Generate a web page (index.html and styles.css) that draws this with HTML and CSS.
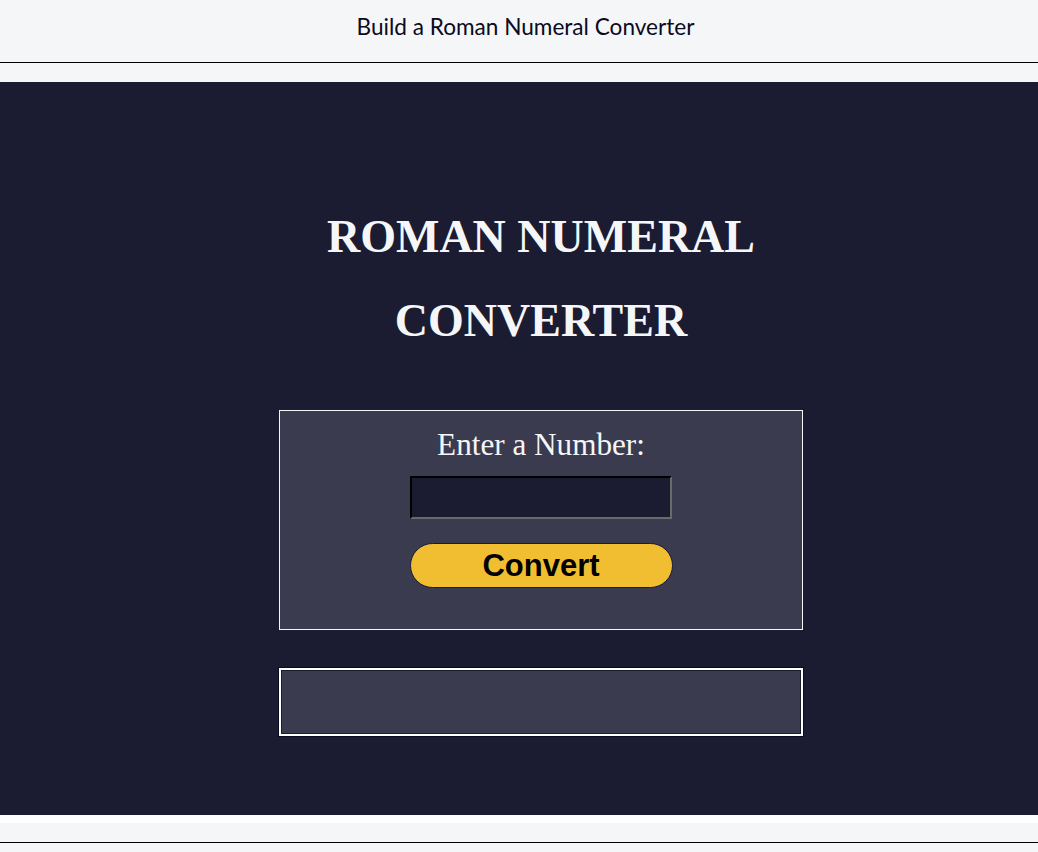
FILE: index.html
```
<!DOCTYPE html>
<html lang="en">
<head>
<meta charset="utf-8">
<title>Roman Numeral Converter</title>
<link rel="stylesheet" href="styles.css">
</head>
<body>
<header class="topbar">
  <span class="topbar-title">Build a Roman Numeral Converter</span>
</header>
<div class="spacer"></div>
<main class="app">
  <div class="container">
    <h1 class="title">ROMAN NUMERAL CONVERTER</h1>
    <form class="card" onsubmit="return false;">
      <label class="label" for="number">Enter a Number:</label>
      <input class="number-input" id="number" type="number">
      <button class="convert-btn" type="button">Convert</button>
    </form>
    <div class="output"></div>
  </div>
</main>
<div class="white-band"></div>
<div class="footer-bar"></div>
<div class="footer-rest"></div>
</body>
</html>
```
FILE: styles.css
```
html, body {
  margin: 0;
  padding: 0;
  background: #f5f6f7;
}

.topbar {
  height: 62px;
  border-bottom: 1px solid #000;
  background: #f5f6f7;
  display: flex;
  align-items: center;
  justify-content: center;
  padding-left: 13px;
}

.topbar-title {
  font-family: Lato, "Liberation Sans", sans-serif;
  font-size: 22.6px;
  color: #0a0a23;
  position: relative;
  top: -5px;
}

.spacer {
  height: 19px;
  background: #f5f6f7;
}

.app {
  background: #1b1b32;
  height: 733px;
  padding-left: 44px;
  box-sizing: border-box;
  padding-top: 113px;
}

.container {
  width: 524px;
  margin: 0 auto;
  display: flex;
  flex-direction: column;
  align-items: stretch;
}

.title {
  margin: 0;
  font-family: "Liberation Serif", "Times New Roman", serif;
  font-weight: bold;
  font-size: 46px;
  line-height: 84px;
  color: #f5f6f7;
  text-align: center;
}

.card {
  margin: 47px 0 0;
  height: 220px;
  box-sizing: border-box;
  border: 1px solid #f5f6f7;
  background: #3b3b4f;
  display: flex;
  flex-direction: column;
  align-items: center;
  padding-top: 16px;
}

.label {
  font-family: "Liberation Serif", "Times New Roman", serif;
  font-size: 31.2px;
  line-height: 36px;
  color: #f5f6f7;
}

.number-input {
  margin-top: 13px;
  width: 262px;
  height: 43px;
  box-sizing: border-box;
  background: #1b1b32;
  border: 2px inset #6a6a6a;
  border-top-color: #2a2a2a;
  border-left-color: #2a2a2a;
  color: #f5f6f7;
  padding: 0 4px;
  font-size: 20px;
}

.convert-btn {
  margin-top: 24px;
  width: 263px;
  height: 45px;
  box-sizing: border-box;
  background: #f1be32;
  border: 1px solid #1b1b32;
  border-radius: 23px;
  font-family: "Liberation Sans", Arial, sans-serif;
  font-weight: bold;
  font-size: 31px;
  color: #000;
  padding: 0;
}

.output {
  margin-top: 38px;
  height: 68px;
  box-sizing: border-box;
  border: 2px solid #ffffff;
  outline: 1px solid #0a0a23;
  background: #3b3b4f;
  box-shadow: inset 0 0 0 1px #1b1b32;
}

.white-band {
  height: 8px;
  background: #ffffff;
}

.footer-bar {
  height: 19px;
  background: #f5f6f7;
  border-bottom: 1px solid #000;
}

.footer-rest {
  height: 10px;
  background: #f5f6f7;
}
```
